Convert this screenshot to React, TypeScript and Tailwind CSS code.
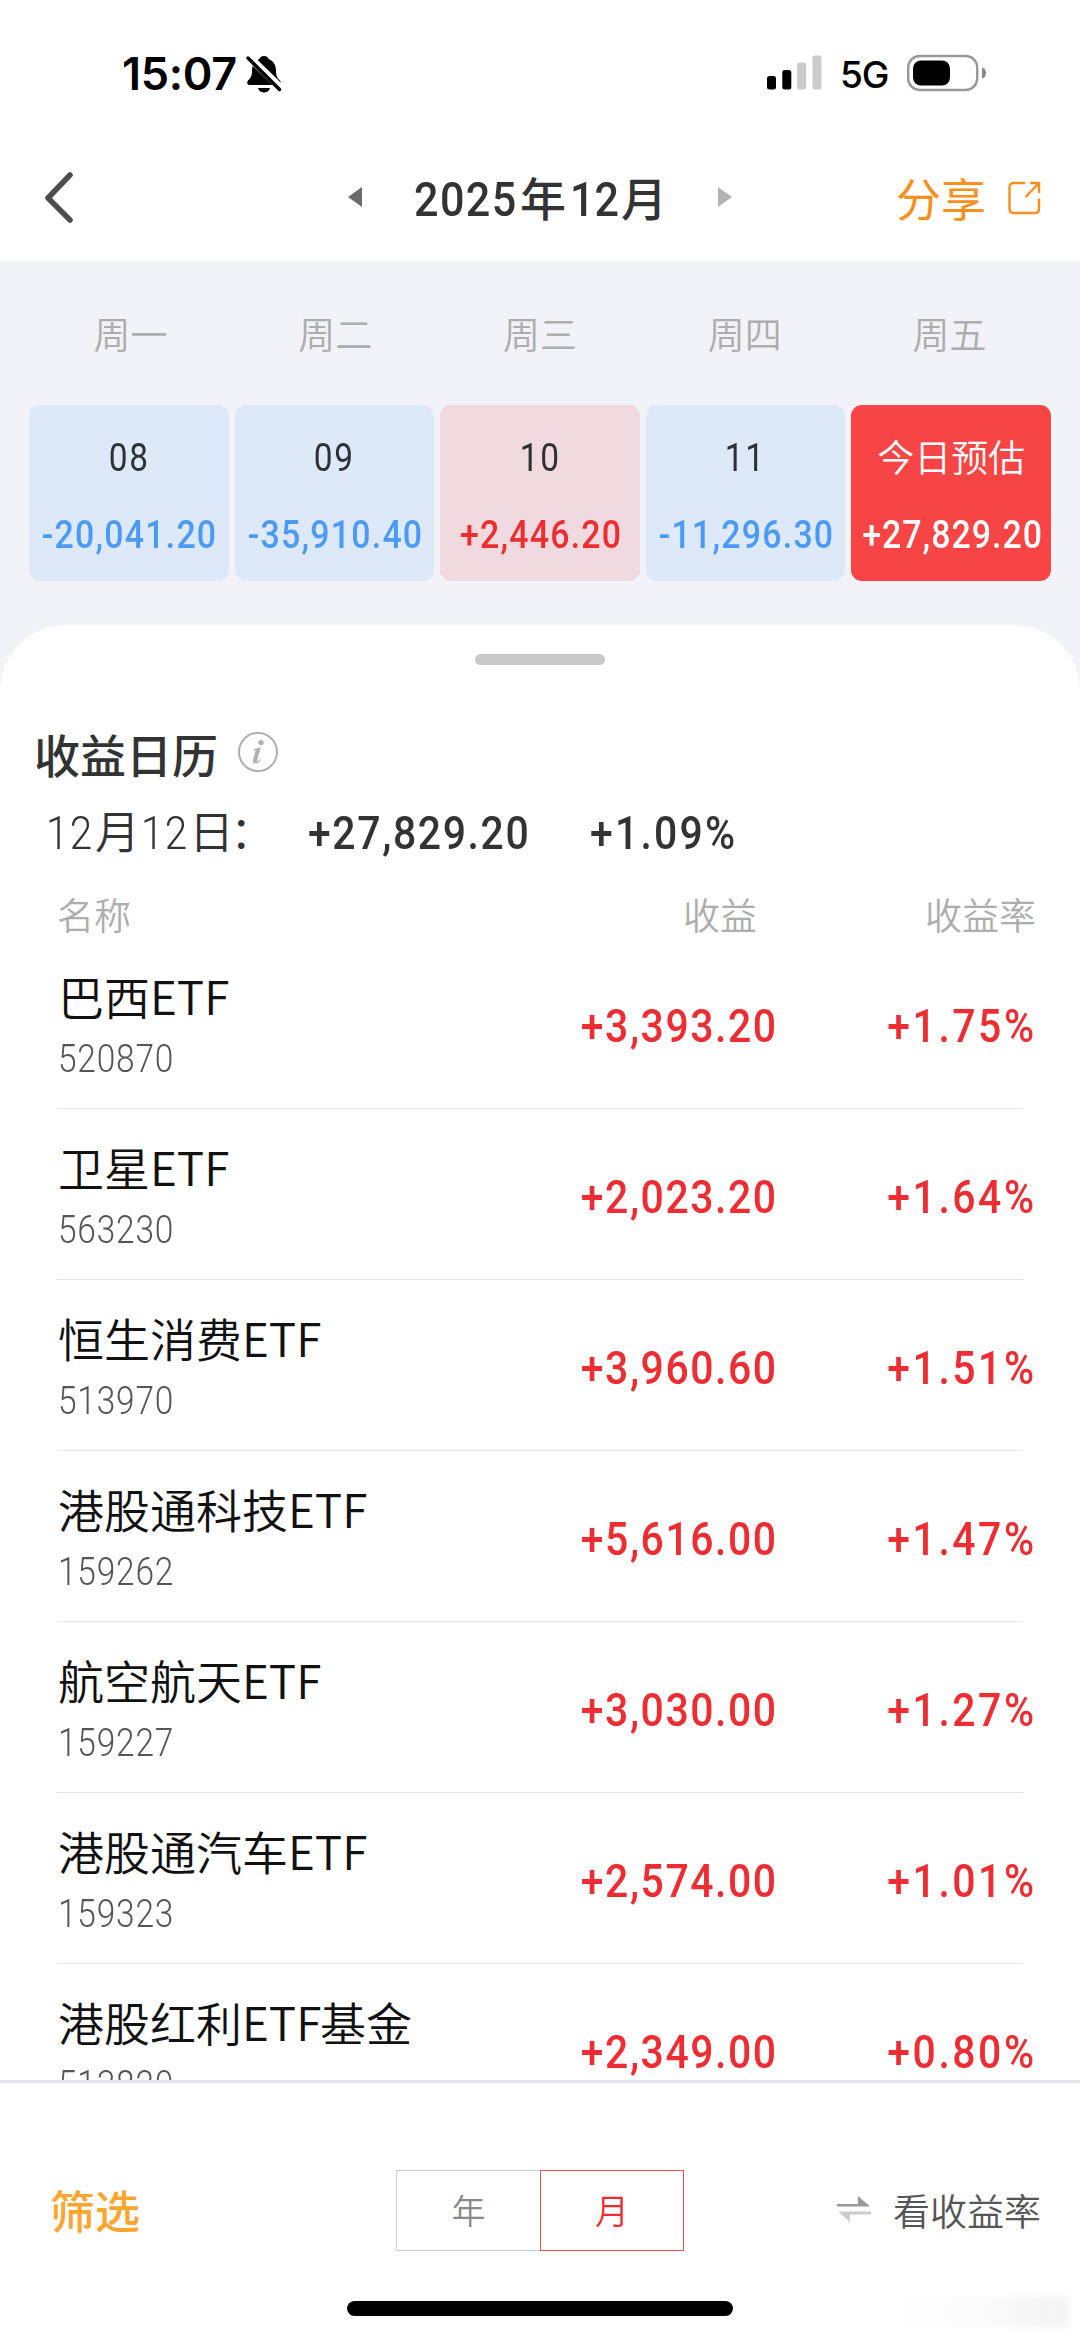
import React from "react";

const weekdays = ["周一", "周二", "周三", "周四", "周五"];

const days = [
  { label: "08", value: "-20,041.20", box: "bg-[#dde9f9]", tone: "text-[#4b9af6]" },
  { label: "09", value: "-35,910.40", box: "bg-[#dde9f9]", tone: "text-[#4b9af6]" },
  { label: "10", value: "+2,446.20", box: "bg-[#f1dadf]", tone: "text-[#ee2d33]" },
  { label: "11", value: "-11,296.30", box: "bg-[#dde9f9]", tone: "text-[#4b9af6]" },
];

const funds = [
  { name: "巴西", suffix: "", code: "520870", profit: "+3,393.20", rate: "+1.75%" },
  { name: "卫星", suffix: "", code: "563230", profit: "+2,023.20", rate: "+1.64%" },
  { name: "恒生消费", suffix: "", code: "513970", profit: "+3,960.60", rate: "+1.51%" },
  { name: "港股通科技", suffix: "", code: "159262", profit: "+5,616.00", rate: "+1.47%" },
  { name: "航空航天", suffix: "", code: "159227", profit: "+3,030.00", rate: "+1.27%" },
  { name: "港股通汽车", suffix: "", code: "159323", profit: "+2,574.00", rate: "+1.01%" },
  { name: "港股红利", suffix: "基金", code: "513820", profit: "+2,349.00", rate: "+0.80%" },
];

/** Narrow numerals. */
function Num({ children, className = "" }: { children: React.ReactNode; className?: string }) {
  return (
    <span
      className={
        "inline-block whitespace-nowrap font-['Roboto','Noto_Sans_CJK_SC',sans-serif] scale-x-[0.88] " + className
      }
    >
      {children}
    </span>
  );
}

function StatusBar() {
  return (
    <div className="flex h-[147px] shrink-0 pl-[122px] font-['Inter',sans-serif] text-black">
      <div className="mt-[46px] w-[124px] text-[45px] leading-[56px] font-semibold tracking-[-0.3px] whitespace-nowrap">15:07</div>
      <svg className="mt-[55px]" width="36" height="38" viewBox="0 0 36 38">
        <path
          d="M18 1c-2.4 0-4 1.3-4.6 3C9 5.600 6 9.500 6 15.500c0 6-1.400 7.500-3.800 9.800C.6 27 .8 30 3.500 30h29c2.700 0 3-3 1.300-4.700C31.400 23 30 21.500 30 15.500 30 9.500 27 5.600 22.600 4 22 2.300 20.400 1 18 1z"
          fill="black"
        />
        <path d="M12 33h12c-.8 3-3.200 4.500-6 4.500S12.800 36 12 33z" fill="black" />
        <path d="M1 0L36 34" stroke="white" strokeWidth="7.500" />
        <path d="M2 3L33.500 34.500" stroke="black" strokeWidth="3.400" strokeLinecap="round" />
      </svg>
      <svg className="mt-[55px] ml-[485px]" width="56" height="36" viewBox="0 0 56 36">
        <rect x="0" y="21" width="9" height="13.500" rx="2.500" />
        <rect x="15.300" y="15" width="9" height="19.500" rx="2.500" />
        <rect x="30.200" y="7.500" width="9" height="27" rx="2.500" fill="#cbcbcb" />
        <rect x="45.500" y="0.500" width="9" height="34" rx="2.500" fill="#cbcbcb" />
      </svg>
      <div className="mt-[52px] ml-[17px] w-[67px] text-[37px] leading-[46px] font-medium tracking-[-1px]">5G</div>
      <svg className="mt-[54px]" width="80" height="38" viewBox="0 0 80 38">
        <rect x="1.200" y="2" width="69" height="34" rx="11.500" fill="none" stroke="#999" strokeWidth="2.400" />
        <rect x="6" y="6.500" width="37" height="25" rx="8" />
        <path d="M75 13.500c3 .7 4 3 4 5.500s-1 4.800-4 5.500z" fill="#888" />
      </svg>
    </div>
  );
}

function NavBar() {
  return (
    <div className="flex h-[114px] shrink-0">
      <svg className="mt-[23px] ml-[43px]" width="32" height="56" viewBox="0 0 32 56" fill="none">
        <path d="M27 5L5 28L27 50" stroke="#4d4d4d" strokeWidth="5.500" strokeLinecap="round" strokeLinejoin="round" />
      </svg>
      <svg className="mt-[40px] ml-[273px]" width="14" height="20" viewBox="0 0 14 20">
        <path d="M14 0V20L0 10z" fill="#6b6b6b" />
      </svg>
      <h1 className="mt-[22px] ml-[52px] flex w-[260px] text-[46px] leading-[60px] font-medium text-[#333] whitespace-nowrap">
        <Num className="mt-px w-[106px] origin-left text-[49px] tracking-[1.6px]">2025</Num>
        <span className="-mt-[3px] w-[50px]">年</span>
        <Num className="mt-px w-[51px] origin-left text-[49px]">12</Num>
        <span className="-mt-[3px]">月</span>
      </h1>
      <svg className="mt-[40px] ml-[44px]" width="14" height="20" viewBox="0 0 14 20">
        <path d="M0 0V20L14 10z" fill="#b3b3b3" />
      </svg>
      <div className="mt-[21px] ml-[164px] w-[112px] text-[45px] leading-[60px] text-[#f98f1d]">分享</div>
      <svg className="mt-[34px]" width="34" height="34" viewBox="0 0 34 34" fill="none" stroke="#f98f1d" strokeWidth="2.400">
        <path d="M17 2H5.500Q1.500 2 1.500 6V28Q1.500 32 5.500 32H27Q31 32 31 28V17.500" />
        <path d="M22 2H31V12M31 2L17.500 16" />
      </svg>
    </div>
  );
}

function Calendar() {
  return (
    <div className="h-[364px] shrink-0 bg-[#f2f3f8]">
      <div className="grid grid-cols-5 px-[28px] pt-[44px]">
        {weekdays.map((d) => (
          <div key={d} className="text-center text-[37px] leading-[56px] font-[350] text-[#adadad]">
            {d}
          </div>
        ))}
      </div>
      <div className="mt-[44px] grid grid-cols-5 gap-[6px] px-[29px]">
        {days.map((d) => (
          <div key={d.label} className={"flex h-[176px] flex-col items-center rounded-[11px] pt-[29px] " + d.box}>
            <Num className="text-[38px] leading-[48px] tracking-[0.05em] text-[#2f3033]">{d.label}</Num>
            <Num className={"mt-[29px] pl-[2px] text-[38.5px] leading-[48px] font-medium tracking-[0.036em] " + d.tone}>
              {d.value}
            </Num>
          </div>
        ))}
        <div className="flex h-[176px] flex-col items-center rounded-[11px] bg-[#f74545] pt-[27px] text-white">
          <div className="text-[37px] leading-[48px] font-[350]">今日预估</div>
          <Num className="mt-[31px] pl-[2px] text-[38.5px] leading-[48px] font-medium tracking-[0.03em]">+27,829.20</Num>
        </div>
      </div>
    </div>
  );
}

function Sheet() {
  return (
    <div className="h-[1455px] shrink-0 bg-[#f2f3f8]">
      <div className="flex h-full flex-col overflow-hidden rounded-t-[66px] bg-white">
        <div className="mx-auto mt-[29px] h-[11px] w-[130px] shrink-0 rounded-full bg-[#c9c9c9]" />
        <div className="mt-[58px] flex h-[60px] shrink-0 items-center pl-[34px]">
          <h2 className="text-[46px] leading-[60px] font-medium text-[#333]">收益日历</h2>
          <svg className="mt-[-2px] ml-[19px]" width="42" height="42" viewBox="0 0 42 42">
            <circle cx="21" cy="21" r="19" fill="none" stroke="#b0b0b0" strokeWidth="2" />
            <circle cx="24" cy="11.500" r="2.600" fill="#b0b0b0" />
            <path
              d="M16.500 18.500Q20 17.500 23.800 16L20.300 28.500Q19.500 31 21.500 29.800L23.500 28L24 28.600Q21 33 17.500 32.500Q15.200 32 16 29L18.500 20.500Q19 19.300 16.400 19.300z"
              fill="#b0b0b0"
            />
          </svg>
        </div>
        <div className="mt-[20px] flex h-[60px] shrink-0 items-center text-[#333]">
          <div className="ml-[46px] flex w-[262px] text-[45px] leading-[60px] font-[350] whitespace-nowrap">
            <Num className="w-[49px] origin-left text-[46px] font-light tracking-[0.03em]">12</Num>
            <span className="-mt-[3px] w-[46px]">月</span>
            <Num className="w-[48px] origin-left text-[46px] font-light tracking-[0.03em]">12</Num>
            <span className="-mt-[3px] w-[41px]">日</span>
            <span className="-mt-[3px]">：</span>
          </div>
          <Num className="w-[282px] origin-left text-[46.500px] leading-[60px] font-medium tracking-[0.04em]">+27,829.20</Num>
          <Num className="origin-left text-[46.500px] leading-[60px] font-medium tracking-[0.055em]">+1.09%</Num>
        </div>
        <div className="mt-[25px] flex h-[54px] shrink-0 items-center pl-[57px] text-[37px] font-[350] text-[#adadad]">
          <div className="flex-1">名称</div>
          <div>收益</div>
          <div className="mr-[44px] ml-[168px]">收益率</div>
        </div>
        <div className="mt-[-4px] flex flex-col">
          {funds.map((f) => (
            <div key={f.code} className="h-[171px] shrink-0">
              <div className="flex h-[170px] pl-[58px]">
                <div className="flex-1">
                  <div className="mt-[25px] flex text-[46px] leading-[64px] font-[350] text-[#111] whitespace-nowrap">
                    <span>{f.name}</span>
                    <span className="w-[78px]">ETF</span>
                    <span>{f.suffix}</span>
                  </div>
                  <Num className="mt-[8px] block origin-left text-[38px] leading-[48px] font-light tracking-[0.024em] text-[#555]">
                    {f.code}
                  </Num>
                </div>
                <Num className="mt-[58px] h-[60px] origin-right text-[46.500px] leading-[60px] font-medium tracking-[0.038em] text-[#ee2d33]">
                  {f.profit}
                </Num>
                <div className="mt-[58px] mr-[43px] w-[259px] text-right">
                  <Num className="origin-right text-[46.500px] leading-[60px] font-medium tracking-[0.062em] text-[#ee2d33]">
                    {f.rate}
                  </Num>
                </div>
              </div>
              <div className="mr-[57px] ml-[57px] h-px bg-[#e4e4e4]" />
            </div>
          ))}
        </div>
      </div>
    </div>
  );
}

function Footer() {
  return (
    <div className="flex flex-1 flex-col border-t-[3px] border-[#e4e4ef] bg-white">
      <div className="mt-[86px] flex h-[82px] items-center">
        <div className="ml-[50px] w-[346px] text-[45px] leading-[60px] font-medium text-[#fca52f]">筛选</div>
        <div className="flex h-[81px] w-[288px] text-[34px] font-[350]">
          <div className="flex flex-1 items-center justify-center border border-r-0 border-[#cfcfcf] pb-[2px] text-[#8a8a8a]">年</div>
          <div className="flex w-[144px] items-center justify-center border-[1.500px] border-[#e8525a] pb-[2px] text-[#ee2d33]">月</div>
        </div>
        <svg className="-mt-[2px] ml-[152px]" width="36" height="28" viewBox="0 0 36 28">
          <path d="M1 9H22V1L34 11.500H1z" fill="#999" />
          <path d="M35 16.500H2L14 27V19.500H35z" fill="#ccc" />
        </svg>
        <div className="ml-[21px] text-[37px] leading-[56px] font-[350] text-[#555] whitespace-nowrap">看收益率</div>
      </div>
      <div className="flex flex-1 items-start">
        <div className="mt-[50px] ml-[347px] h-[15px] w-[386px] rounded-full bg-black" />
        <div className="mt-[46px] ml-[160px] h-[30px] w-[176px] bg-gradient-to-r from-white via-[#fbfbfb] to-[#f3f3f3] blur-[3px]" />
      </div>
    </div>
  );
}

export default function App() {
  return (
    <div className="flex h-[2339px] w-[1080px] flex-col overflow-hidden bg-white font-['Noto_Sans_CJK_SC',sans-serif]">
      <StatusBar />
      <NavBar />
      <Calendar />
      <Sheet />
      <Footer />
    </div>
  );
}
